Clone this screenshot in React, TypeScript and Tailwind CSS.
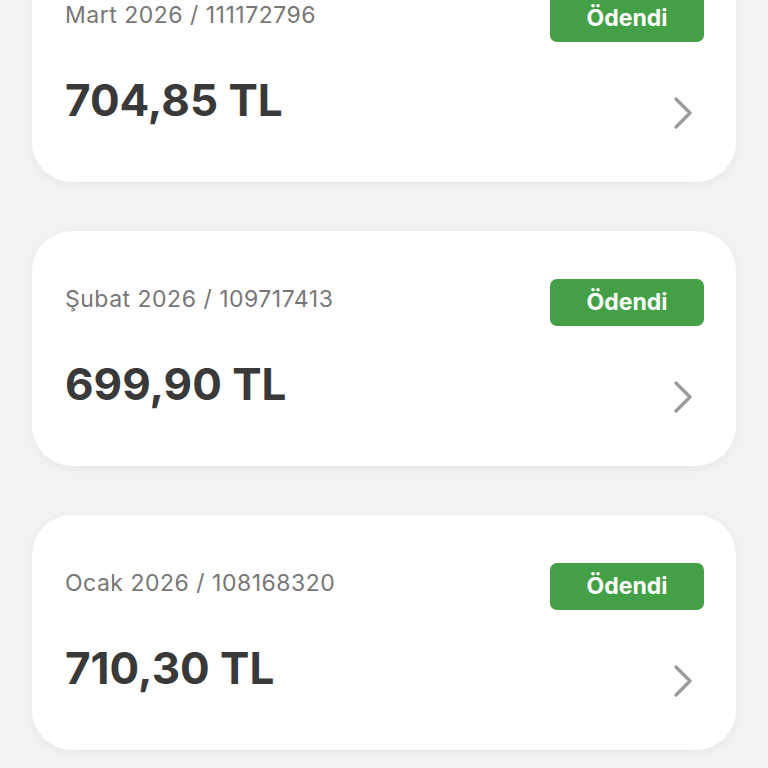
// Invoice list — paid monthly bills, each card with a status badge and chevron.

type Invoice = {
  period: string;
  number: string;
  amount: string;
};

const INVOICES: Invoice[] = [
  { period: 'Mart 2026', number: '111172796', amount: '704,85 TL' },
  { period: 'Şubat 2026', number: '109717413', amount: '699,90 TL' },
  { period: 'Ocak 2026', number: '108168320', amount: '710,30 TL' },
];

function Chevron() {
  return (
    <svg width="20" height="32" viewBox="0 0 20 32" fill="none" className="shrink-0">
      <path
        d="M3 2 L17 16 L3 30"
        stroke="#9a9a9a"
        strokeWidth="3.2"
        strokeLinecap="round"
        strokeLinejoin="round"
      />
    </svg>
  );
}

function InvoiceCard({ invoice }: { invoice: Invoice }) {
  return (
    <div className="h-[235px] rounded-[40px] bg-white pt-[48px] pl-[33px] pr-[32px] shadow-[0_2px_10px_rgba(0,0,0,0.05)]">
      <div className="flex items-start justify-between">
        <span className="mt-[9px] text-[23px] leading-none tracking-[0.5px] text-[#777777]">
          {invoice.period} / {invoice.number}
        </span>
        <span className="flex h-[47px] w-[154px] items-center justify-center rounded-[7px] bg-[#43a047] text-[23px] font-bold text-white">
          Ödendi
        </span>
      </div>
      <div className="mt-[36px] flex items-start justify-between pr-[11px]">
        <span className="text-[44px] font-bold leading-none text-[#393939]">{invoice.amount}</span>
        <div className="mt-[19px]">
          <Chevron />
        </div>
      </div>
    </div>
  );
}

export default function App() {
  return (
    <div
      className="h-[768px] overflow-hidden bg-[#f2f2f2] px-[32px]"
      style={{ fontFamily: 'Inter, "Noto Sans", sans-serif' }}
    >
      <div className="-mt-[53px] flex flex-col gap-[49px]">
        {INVOICES.map((inv) => (
          <InvoiceCard key={inv.number} invoice={inv} />
        ))}
      </div>
    </div>
  );
}
